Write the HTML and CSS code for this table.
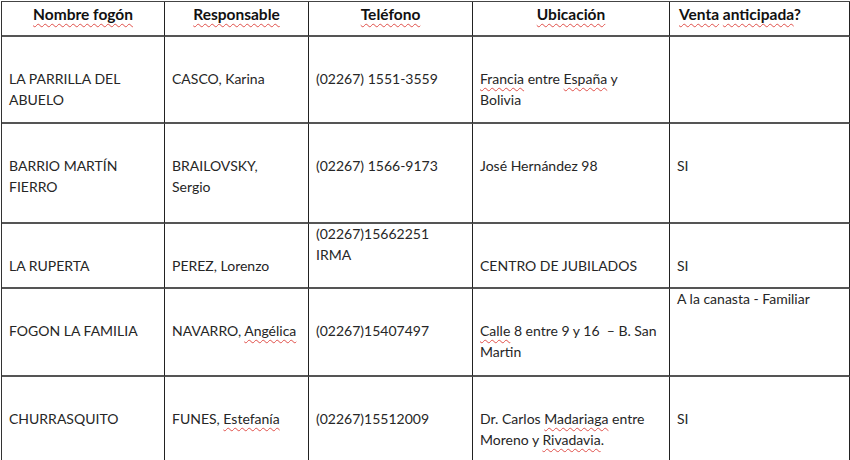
FILE: index.html
```html
<!DOCTYPE html>
<html lang="es">
<head>
<meta charset="utf-8">
<title>Fogones</title>
<link rel="stylesheet" href="styles.css">
</head>
<body>
<div class="sheet">
  <div class="grid">
    <div class="cell head center"><span class="sp">Nombre fogón</span></div>
    <div class="cell head center"><span class="sp">Responsable</span></div>
    <div class="cell head center"><span class="sp">Teléfono</span></div>
    <div class="cell head center"><span class="sp">Ubicación</span></div>
    <div class="cell head"><span class="sp">Venta</span> <span class="sp">anticipada</span>?</div>

    <div class="cell low">LA PARRILLA DEL<br>ABUELO</div>
    <div class="cell low">CASCO, Karina</div>
    <div class="cell low">(02267) 1551-3559</div>
    <div class="cell low"><span class="sp">Francia</span> entre <span class="sp">España</span> y<br>Bolivia</div>
    <div class="cell low"></div>

    <div class="cell low">BARRIO MARTÍN<br>FIERRO</div>
    <div class="cell low">BRAILOVSKY,<br>Sergio</div>
    <div class="cell low">(02267) 1566-9173</div>
    <div class="cell low">José Hernández 98</div>
    <div class="cell low">SI</div>

    <div class="cell low">LA RUPERTA</div>
    <div class="cell low">PEREZ, Lorenzo</div>
    <div class="cell top">(02267)15662251<br>IRMA</div>
    <div class="cell low">CENTRO DE JUBILADOS</div>
    <div class="cell low">SI</div>

    <div class="cell low">FOGON LA FAMILIA</div>
    <div class="cell low">NAVARRO, <span class="sp">Angélica</span></div>
    <div class="cell low">(02267)15407497</div>
    <div class="cell low"><span class="sp">Calle</span> 8 entre 9 y 16 &nbsp;– B. San<br>Martin</div>
    <div class="cell top">A la canasta - Familiar</div>

    <div class="cell low">CHURRASQUITO</div>
    <div class="cell low">FUNES, <span class="sp">Estefanía</span></div>
    <div class="cell low">(02267)15512009</div>
    <div class="cell low">Dr. Carlos <span class="sp">Madariaga</span> entre<br>Moreno y <span class="sp">Rivadavia</span>.</div>
    <div class="cell low">SI</div>
  </div>
</div>
</body>
</html>
```

FILE: styles.css
```css
html, body {
  margin: 0;
  padding: 0;
  background: #ffffff;
}

.sheet {
  width: 850px;
  height: 460px;
  overflow: hidden;
  padding: 1px 0 0 1px;
  box-sizing: border-box;
}

.grid {
  display: grid;
  grid-template-columns: 163px 144px 164px 197px 180px;
  grid-template-rows: 35px 87px 100px 65px 88px 90px;
  border-top: 1px solid #444;
  border-left: 1px solid #333;
  font-family: Lato, "Liberation Sans", sans-serif;
  font-size: 14px;
  line-height: 20.5px;
  color: #262626;
}

.cell {
  border-right: 1px solid #222;
  border-bottom: 2px solid #555;
  padding: 0 7px;
  box-sizing: border-box;
  white-space: nowrap;
  overflow: hidden;
}

.head {
  font-size: 15.5px;
  font-weight: 700;
  color: #111;
  padding-top: 2px;
  padding-left: 9px;
}

.center {
  text-align: center;
  padding-left: 7px;
}

.low {
  padding-top: 32px;
}

.top {
  padding-top: 0;
}

.sp {
  text-decoration: underline wavy #e0504a;
  text-decoration-thickness: 1px;
  text-underline-offset: 3px;
}
```
